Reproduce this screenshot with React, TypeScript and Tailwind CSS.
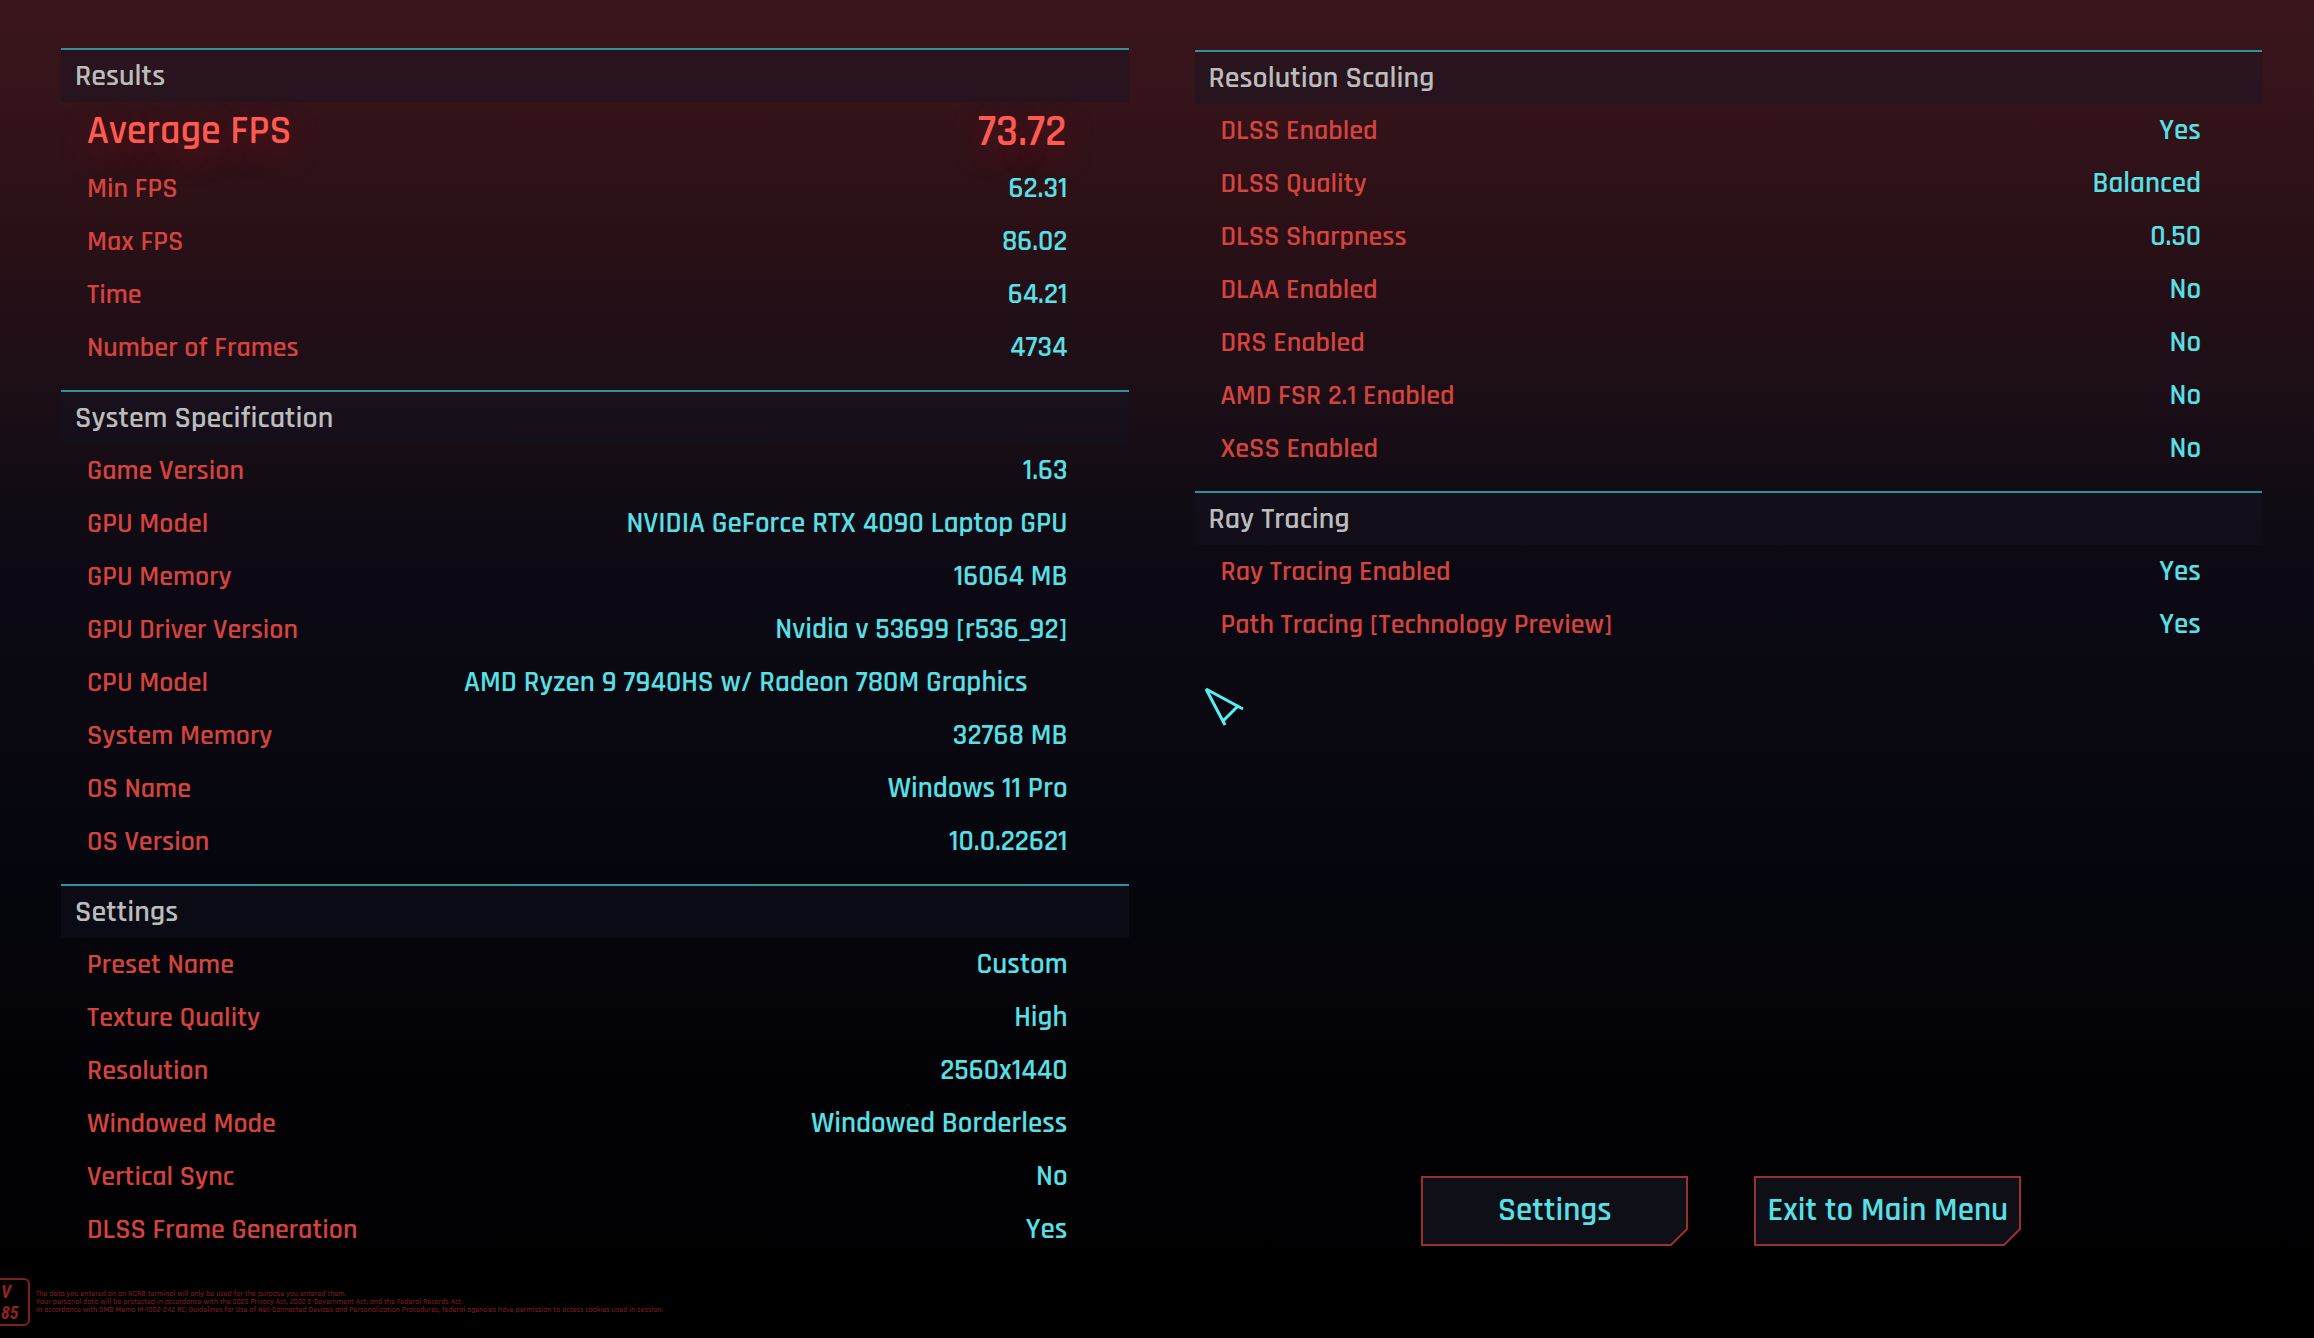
import type { ReactNode } from "react";

type Row = { label: string; value: string; hero?: boolean; inset?: boolean };

const results: Row[] = [
  { label: "Average FPS", value: "73.72", hero: true },
  { label: "Min FPS", value: "62.31" },
  { label: "Max FPS", value: "86.02" },
  { label: "Time", value: "64.21" },
  { label: "Number of Frames", value: "4734" },
];

const system: Row[] = [
  { label: "Game Version", value: "1.63" },
  { label: "GPU Model", value: "NVIDIA GeForce RTX 4090 Laptop GPU" },
  { label: "GPU Memory", value: "16064 MB" },
  { label: "GPU Driver Version", value: "Nvidia v 53699 [r536_92]" },
  { label: "CPU Model", value: "AMD Ryzen 9 7940HS w/ Radeon 780M Graphics", inset: true },
  { label: "System Memory", value: "32768 MB" },
  { label: "OS Name", value: "Windows 11 Pro" },
  { label: "OS Version", value: "10.0.22621" },
];

const settings: Row[] = [
  { label: "Preset Name", value: "Custom" },
  { label: "Texture Quality", value: "High" },
  { label: "Resolution", value: "2560x1440" },
  { label: "Windowed Mode", value: "Windowed Borderless" },
  { label: "Vertical Sync", value: "No" },
  { label: "DLSS Frame Generation", value: "Yes" },
];

const scaling: Row[] = [
  { label: "DLSS Enabled", value: "Yes" },
  { label: "DLSS Quality", value: "Balanced" },
  { label: "DLSS Sharpness", value: "0.50" },
  { label: "DLAA Enabled", value: "No" },
  { label: "DRS Enabled", value: "No" },
  { label: "AMD FSR 2.1 Enabled", value: "No" },
  { label: "XeSS Enabled", value: "No" },
];

const rayTracing: Row[] = [
  { label: "Ray Tracing Enabled", value: "Yes" },
  { label: "Path Tracing [Technology Preview]", value: "Yes" },
];

function Section({ title, rows }: { title: string; rows: Row[] }) {
  return (
    <section className="pb-4">
      <h2 className="h-[54px] border-t-2 border-[#2f9299] bg-[#141424]/40 pl-[14px] text-[30px] leading-[52px] font-semibold text-[#bcbcbc]">
        {title}
      </h2>
      <dl>
        {rows.map((row) =>
          row.hero ? (
            <div
              key={row.label}
              className="flex h-[60px] items-center justify-between pr-[62px] pl-[26px] font-semibold text-[#ff5a52] [text-shadow:0_10px_32px_#c0201866]"
            >
              <dt className="text-[40px]">{row.label}</dt>
              <dd className="text-[44px]">{row.value}</dd>
            </div>
          ) : (
            <div key={row.label} className="flex h-[53px] items-center justify-between pr-[61px] pl-[26px] font-semibold">
              <dt className="text-[28px] text-[#d6433d]">{row.label}</dt>
              <dd className={row.inset ? "pr-10 text-[29px] text-[#58e0e7]" : "text-[29px] text-[#58e0e7]"}>{row.value}</dd>
            </div>
          ),
        )}
      </dl>
    </section>
  );
}

function CutButton({ children }: { children: ReactNode }) {
  return (
    <button type="button" className="relative h-[70px] w-[267px] text-[33px] font-semibold text-[#58e0e7]">
      <svg aria-hidden="true" className="absolute inset-0 h-full w-full" viewBox="0 0 267 70">
        <path d="M1 1H266V53L250 69H1Z" fill="#0f0f18" stroke="#98302f" strokeWidth="2" />
      </svg>
      <span className="relative">{children}</span>
    </button>
  );
}

export default function App() {
  return (
    <div className="relative flex min-h-screen flex-col overflow-hidden bg-[linear-gradient(to_bottom,#3a161c_0%,#34131a_8%,#2a1016_17%,#1c0e17_29%,#130c14_36%,#0c0914_43%,#090810_54%,#06060e_64%,#030308_76%,#010103_90%,#000_100%)] font-['Rajdhani','Roboto_Condensed','Roboto',sans-serif]">
      <main className="grid grid-cols-2 gap-[66px] pt-12 pr-[52px] pl-[61px]">
        <div>
          <Section title="Results" rows={results} />
          <Section title="System Specification" rows={system} />
          <Section title="Settings" rows={settings} />
        </div>
        <div className="flex flex-col pt-0.5">
          <Section title="Resolution Scaling" rows={scaling} />
          <Section title="Ray Tracing" rows={rayTracing} />
          <div className="mt-auto flex justify-center gap-[66px] pr-[14px] pb-[26px]">
            <CutButton>Settings</CutButton>
            <CutButton>Exit to Main Menu</CutButton>
          </div>
        </div>
      </main>

      <footer className="flex items-center gap-[6px] pt-[6px]">
        <div className="-ml-4 flex h-12 w-[46px] flex-col justify-center rounded-md border-2 border-[#7f1f1f] pl-[15px] font-['Roboto_Condensed','Roboto',sans-serif] text-[18px] leading-[21px] font-bold text-[#8d2422] italic">
          <span>V</span>
          <span>85</span>
        </div>
        <p className="text-[8px] leading-2 font-semibold whitespace-nowrap text-[#6d1a1a]">
          The data you entered on an NCRB terminal will only be used for the purpose you entered them.
          <br />
          Your personal data will be protected in accordance with the 2025 Privacy Act, 2032 E-Government Act, and the Federal Records Act.
          <br />
          In accordance with OMB Memo M-1002-242 RE; Guidelines for Use of Net-Connected Devices and Personalization Procedures, federal agencies have permission to access cookies used in session.
        </p>
      </footer>

      <svg aria-hidden="true" className="pointer-events-none absolute top-[686px] left-[1203px] h-[42px] w-[42px]" viewBox="0 0 42 42">
        <path d="M3 3L40 23M3 3L22 39M35 20L20 35" fill="none" stroke="#55f0f5" strokeWidth="3" />
      </svg>
    </div>
  );
}
